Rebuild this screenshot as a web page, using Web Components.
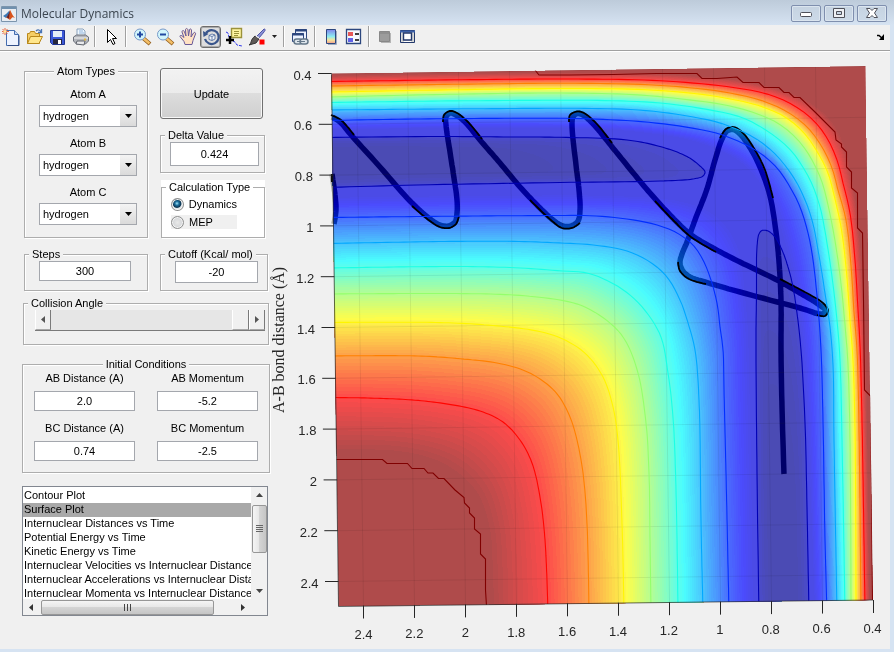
<!DOCTYPE html>
<html lang="en">
<head>
<meta charset="utf-8">
<title>Molecular Dynamics</title>
<style>
html,body{margin:0;min-height:100vh}
body{font:11px/14px "Liberation Sans",Arial,sans-serif;color:#000;background:#d6e3f2}
.row{display:grid;grid-template-columns:124px 108px;gap:12px}
.side{display:flex;flex-direction:column;padding:13px 0 0 22px;width:248px;flex:none}
.top{padding-left:2px;height:172px}
.right{display:flex;flex-direction:column}
.right push-button{margin:4px 5px 9px 0;height:51px}
.right .delta{height:45px;margin:0 3px 7px 0}
.right .calc{height:58px;margin:0 3px 0 1px}
.second{padding-left:2px;margin-top:11px;height:44px}
.angle{height:49px;margin:5px 1px 0 1px}
.initial{height:116px;margin-top:12px}
.atoms{padding-top:9px}
.pairs{display:grid;grid-template-columns:101px 101px;gap:10px 22px;padding-left:11px}
plot-list{margin:13px 2px 0 0;height:130px}
energy-surface{flex:1;min-width:0}
pick-field{margin:0 10px 9px 14px}
.plain{padding:0 5px 0 9px}
.steps{padding:0 16px 0 14px}
.cut{padding:0 9px 0 14px}
</style>
</head>
<body>
<app-window>
  <title-bar slot="title">Molecular Dynamics</title-bar>
  <tool-bar slot="tools"></tool-bar>
  <div class="side">
    <div class="row top">
      <group-panel label="Atom Types" centered>
        <div class="atoms">
        <pick-field label="Atom A"></pick-field>
        <pick-field label="Atom B"></pick-field>
        <pick-field label="Atom C"></pick-field>
        </div>
      </group-panel>
      <div class="right">
        <push-button>Update</push-button>
        <group-panel class="delta" label="Delta Value"><num-field class="plain" name="Delta Value" value="0.424" size="24"></num-field></group-panel>
        <group-panel class="calc" label="Calculation Type" light><radio-set></radio-set></group-panel>
      </div>
    </div>
    <div class="row second">
      <group-panel label="Steps"><num-field class="steps" name="Steps" value="300" size="20"></num-field></group-panel>
      <group-panel label="Cutoff (Kcal/ mol)"><num-field class="cut" name="Cutoff (Kcal/ mol)" value="-20" size="22"></num-field></group-panel>
    </div>
    <group-panel class="angle" label="Collision Angle"><angle-slider></angle-slider></group-panel>
    <group-panel class="initial" label="Initial Conditions" centered>
      <div class="pairs">
        <num-field label="AB Distance (A)" value="2.0" size="20"></num-field>
        <num-field label="AB Momentum" value="-5.2" size="20"></num-field>
        <num-field label="BC Distance (A)" value="0.74" size="20"></num-field>
        <num-field label="BC Momentum" value="-2.5" size="20"></num-field>
      </div>
    </group-panel>
    <plot-list></plot-list>
  </div>
  <energy-surface></energy-surface>
</app-window>

<script>
function define(name, html, setup) {
  customElements.define(name, class extends HTMLElement {
    constructor() {
      super();
      this.attachShadow({mode: 'open'}).innerHTML = html;
    }
    connectedCallback() {
      if (setup && !this.ready) { this.ready = true; setup(this, this.shadowRoot); }
    }
  });
}

define('app-window', `<style>
:host{display:flex;flex-direction:column;min-height:100vh}
.frame{flex:1;display:flex;flex-direction:column;background:#f0f0f0;margin:0 4px 3px 0}
.body{flex:1;display:flex;align-items:stretch}
</style><slot name="title"></slot><div class="frame"><slot name="tools"></slot><div class="body"><slot></slot></div></div>`);

define('title-bar', `<style>
:host{display:flex;align-items:center;height:25px;background:linear-gradient(#bdcbda,#d6e3f2);font:12px/16px "Open Sans","Noto Sans",sans-serif;color:#3c4650;box-sizing:border-box;padding:3px 7px 0 1px}
svg{display:block}
h1{font:inherit;margin:0 auto 0 4px}
button{width:30px;height:17px;margin:0 0 2px 3px;padding:0;border:1px solid #7f8fae;border-radius:2px;background:linear-gradient(#c6d3e1,#ccdae8);box-shadow:inset 0 0 0 1px #dbe5ef;display:grid;place-items:center}
</style>
<svg width="16" height="16" viewBox="0 0 16 16" aria-hidden="true"><path d="M.5.5h15v15H.5z" fill="#e9edf2" stroke="#7b95ad"/><path d="M1 2h14" stroke="#6f90ae" stroke-width="2"/><path d="M2 10l3-2 3-3 2 2-3 4-2 1z" fill="#3b78b5"/><path d="M5 12l3-4 1-4c1 1 2 5 5 8-2-1-3-1-4 1-1 1-2 1-3-1z" fill="#d8531c"/><path d="M6 11l2-4 1-3-1 8-1 1z" fill="#642028"/></svg>
<h1><slot></slot></h1>
<button aria-label="Minimize"><svg width="12" height="10"><rect x=".5" y="4.500" width="11" height="4" rx="1" fill="#fff" stroke="#4e5059"/></svg></button>
<button aria-label="Maximize"><svg width="12" height="10"><path fill-rule="evenodd" d="M.5.5h11v9H.5zM3.500 3.500v3h5v-3z" fill="#eef0f4" stroke="#4e5059"/></svg></button>
<button aria-label="Close"><svg width="12" height="10"><path d="M.5.5h3.500l2 2 2-2h3.500L8.500 5l3 4.500H8l-2-2-2 2H.5l3-4.500z" fill="#fff" stroke="#4e5059"/></svg></button>`);

const ICONS = {
  'New Figure': '<path d="M4.500 2.500h8l4 4v11h-12z" fill="#edf3ff" stroke="#446daf"/><path d="M12.500 2.500v4h4" fill="#c8d8f2" stroke="#446daf"/><path d="M6 17.500h11v-10" fill="none" stroke="#324e88"/><path d="M3 0v7M0 3.500h7M.5 1l5 5M5.500 1l-5 5" stroke="#e96843" stroke-width="1"/><circle cx="3" cy="3.500" r="1.500" fill="#ffe59b"/>',
  'Open File': '<path d="M2.500 15.500v-10h2l1-2h4l1 2h4v10z" fill="#f5ce65" stroke="#b8871a"/><path d="M2.500 15.500l3-7h12l-3.500 7z" fill="#ffe68b" stroke="#b8871a"/><path d="M11 3c2-2 4-1 5 1M16.500 1v3.500H13" fill="none" stroke="#4975b4" stroke-width="1.300"/>',
  'Save Figure': '<path d="M2.500 2.500h14v14h-12l-2-2z" fill="#3b58d8" stroke="#203391"/><path d="M5 3h9v6H5z" fill="#e3ecf7"/><path d="M5 11h9v5H5z" fill="#25263d"/><path d="M10 12h3v4h-3z" fill="#fff"/>',
  'Print Figure': '<path d="M6 8V1h6l2 2v6" fill="#eef7ff" stroke="#8ba3bd"/><path d="M8 3h4M8 5h5" stroke="#8fb3da"/><path d="M2.500 9l3-2h9l3 2v4l-3 3h-9l-3-3z" fill="#b4b7bd" stroke="#6c717b"/><path d="M3 10h14" stroke="#f5f5f5"/><path d="M6 13h8l-1 4-8-1z" fill="#e8e9ec" stroke="#62666e"/><path d="M13 11.500h2" stroke="#e1b73f" stroke-width="2"/>',
  'Edit Plot': '<path d="M5.500 1.500v13l3-3 2.500 5 2-1-2.500-5h4z" fill="#fff" stroke="#000"/>',
  'Zoom In': '<path d="M10 10l7 6" stroke="#915b19" stroke-width="4"/><path d="M10 10l6.500 5.500" stroke="#f3bf68" stroke-width="2.500"/><circle cx="7" cy="6.500" r="5.500" fill="#d2f5fb" stroke="#7899c9"/><path d="M4 6.500h6M7 3.500v6" stroke="#2148a1" stroke-width="2"/>',
  'Zoom Out': '<path d="M10 10l7 6" stroke="#915b19" stroke-width="4"/><path d="M10 10l6.500 5.500" stroke="#f3bf68" stroke-width="2.500"/><circle cx="7" cy="6.500" r="5.500" fill="#d2f5fb" stroke="#7899c9"/><path d="M4 6.500h6" stroke="#2148a1" stroke-width="2"/>',
  'Pan': '<path d="M6 16.500l-1-3-4-5c0-2 2-1 4 1L3 4c0-2 2-2 2.500 0L7 8 6.500 2c0-2 2-2 2.500 0L9.500 8l1-6c0-2 2.500-1 2 1L12 9l2.500-4c1-1.500 2.500 0 2 1L14 12.500l-1 4z" fill="#ffe2c3" stroke="#6a5a98"/>',
  'Rotate 3D': '<path d="M4 5a7 7 0 1 1-1 6" fill="none" stroke="#3a568c" stroke-width="2.200"/><path d="M1 3l.5 6 5-3z" fill="#3a568c"/><path d="M7 7.500l3-1.500 3 1v4l-3 1.500-3-1zM7 7.500l3 1v4M10 8.500l3-1.500" fill="#f2f6fc" stroke="#49679a" stroke-width=".8"/>',
  'Data Cursor': '<path d="M1 4l2 1 1 4 2 3 4 2 2 3 5 1" fill="none" stroke="#3038ec" stroke-dasharray="3 1"/><path d="M6.500.5h10v9h-10z" fill="#fff5a2" stroke="#9b923b" stroke-width="1.400"/><path d="M9 3.500h5M9 5.500h5M9 7.500h4" stroke="#9b923b"/><path d="M5 8v8M1 12h8" stroke="#000" stroke-width="2.500"/>',
  'Brush': '<path d="M16 1c2 0 1 2 0 3l-5 6-2-2z" fill="#8990d4" stroke="#4d54a8"/><path d="M7 8l4 3-3 4-7 2c3-2 1-5 6-9z" fill="#5d5957" stroke="#333"/><path d="M8 8l3 2" stroke="#eee" stroke-width="1.500"/><path d="M11.500 11.500h5v5h-5z" fill="#f00"/>',
  'Link Plot': '<path d="M4.500 1.500h11v10h-11z" fill="#edf3ff" stroke="#2d477e"/><path d="M4 2.500h12" stroke="#2d477e" stroke-width="2"/><path d="M1.500 5.500h11v8h-11z" fill="#edf3ff" stroke="#2d477e"/><path d="M1 6.500h12" stroke="#2d477e" stroke-width="2"/><rect x="3" y="11" width="8" height="5" rx="2.500" fill="#dce4eb" stroke="#65788a" stroke-width="1.500"/><rect x="9" y="11" width="8" height="5" rx="2.500" fill="#dce4eb" stroke="#65788a" stroke-width="1.500"/><path d="M6 13.500h8" stroke="#65788a"/>',
  'Insert Colorbar': '<defs><linearGradient id="g" x2="0" y2="1"><stop stop-color="#8183ec"/><stop offset=".5" stop-color="#8cecf1"/><stop offset=".75" stop-color="#f5e59a"/><stop offset="1" stop-color="#f09c8e"/></linearGradient></defs><path d="M4.500 1.500h9v14h-9z" fill="url(#g)" stroke="#2d477e"/><path d="M14.500 3v13.500H6" fill="none" stroke="#9fabc0"/>',
  'Insert Legend': '<path d="M1.500 1.500h14v14h-14z" fill="#f5f8fc" stroke="#2d477e" stroke-width="1.300"/><path d="M3 4h5v4H3z" fill="#e65757"/><path d="M3 10h5v4H3z" fill="#6161e7"/><path d="M10 6h4M10 12h4" stroke="#000" stroke-width="1.300"/>',
  'Hide Plot Tools': '<path d="M5 5h10v10H5z" fill="#b5b5b5"/><path d="M3.500 3.500h10v10h-10z" fill="#9c9c9c" stroke="#888"/><path d="M4 5h9" stroke="#828282"/>',
  'Show Plot Tools': '<path d="M1.500 2.500h14v12h-14z" fill="#d8d9d7" stroke="#23396c"/><path d="M1 3.500h15" stroke="#3d61a9" stroke-width="2"/><path d="M4.500 5h8v7h-8z" fill="#fff" stroke="#23396c" stroke-width="1.400"/><path d="M5 13.500h7" stroke="#fff"/>'
};
define('tool-button', `<style>
:host{display:block}
button{display:grid;place-items:center;width:21px;height:22px;padding:0;border:1px solid transparent;border-radius:3px;background:none}
:host([pressed]) button{border-color:#6c6c6c;background:#dedede;box-shadow:inset 0 0 0 1px #aaa}
svg{display:block;overflow:visible}
</style><button></button>`, (el, root) => {
  const b = root.querySelector('button'), n = el.getAttribute('name');
  b.setAttribute('aria-label', n);
  if (el.hasAttribute('pressed')) b.setAttribute('aria-pressed', 'true');
  b.innerHTML = `<svg width="18" height="18" viewBox="0 0 18 18">${ICONS[n]}</svg>`;
});
const tools = names => names.map(n => `<tool-button name="${n}"${n === 'Rotate 3D' ? ' pressed' : ''}></tool-button>`).join('');
define('tool-bar', `<style>
:host{display:flex;box-sizing:border-box;align-items:center;gap:2px;height:26px;border-bottom:1px solid #a0a0a0;box-shadow:0 1px #fff;padding-bottom:2px}
i{width:6px;height:21px;background:linear-gradient(90deg,transparent 2px,#a0a0a0 2px 3px,#fff 3px 4px,transparent 4px)}
.drop,.dock{border:0;background:none;padding:0;width:10px;height:20px;display:grid;place-items:center}
.dock{margin:0 4px 0 auto}
</style>${tools(['New Figure','Open File','Save Figure','Print Figure'])}<i></i>${tools(['Edit Plot'])}<i></i>${tools(['Zoom In','Zoom Out','Pan','Rotate 3D','Data Cursor','Brush'])}
<button class="drop" aria-label="Brush colour"><svg width="5" height="3"><path d="M0 0h5L2.500 3z" fill="#222"/></svg></button>
<i></i>${tools(['Link Plot'])}<i></i>${tools(['Insert Colorbar','Insert Legend'])}<i></i>${tools(['Hide Plot Tools','Show Plot Tools'])}
<button class="dock" aria-label="Dock"><svg width="8" height="6"><path d="M0 1.500h2l3.500 3" fill="none" stroke="#000" stroke-width="1.500"/><path d="M7 0v6H2z"/></svg></button>`);

define('group-panel', `<style>
:host{display:block}
fieldset{box-sizing:border-box;height:100%;min-width:0;margin:0;padding:0;border:1px solid #adadad;box-shadow:1px 1px #fff,inset 1px 1px #fff}
legend{padding:0 3px;margin-left:4px;background:#f0f0f0;line-height:14px;white-space:nowrap}
:host([centered]) legend{margin:0 auto}
:host([light]){background:#fff}
:host([light]) legend{background:#fff}
</style><fieldset><legend></legend><slot></slot></fieldset>`, (el, root) => {
  root.querySelector('legend').textContent = el.getAttribute('label');
});

define('pick-field', `<style>
:host{display:block}
label{display:block;text-align:center;line-height:14px;margin-bottom:4px}
.box{display:grid;grid-template-columns:1fr 16px;border:1px solid #a4a7ad;background:#fff;height:20px}
select{grid-area:1/1/2/3;appearance:none;border:0;background:none;font:inherit;color:#000;padding:0 0 0 3px;margin:0;width:100%;min-width:0}
span{grid-area:1/2;background:linear-gradient(#f4f4f4,#dadada);display:grid;place-items:center;pointer-events:none}
svg{display:block}
</style><label for="s"></label><div class="box"><span><svg width="7" height="4"><path d="M0 0h7L3.500 4z"/></svg></span><select id="s"><option>hydrogen</option></select></div>`, (el, root) => {
  root.querySelector('label').textContent = el.getAttribute('label');
});

define('num-field', `<style>
:host{display:block}
label{display:block;text-align:center;line-height:14px;margin-bottom:6px}
input{display:block;box-sizing:border-box;width:100%;border:1px solid #a4a7ad;background:#fff;text-align:center;font:inherit;color:#000;padding:0;margin:0}
</style><input id="f" type="text">`, (el, root) => {
  const f = root.querySelector('input');
  f.value = el.getAttribute('value');
  f.style.height = el.getAttribute('size') + 'px';
  const text = el.getAttribute('label');
  if (text) {
    const l = document.createElement('label');
    l.htmlFor = 'f'; l.textContent = text;
    f.before(l);
  } else f.setAttribute('aria-label', el.getAttribute('name'));
});

define('push-button', `<style>
:host{display:block}
button{width:100%;height:100%;border:1px solid #707070;border-radius:3px;background:linear-gradient(#f2f2f2,#ebebeb 50%,#dddddd 50%,#cfcfcf);box-shadow:inset 0 0 0 1px #f7f7f7;font:inherit;color:#000;padding:0}
</style><button><slot></slot></button>`);

define('radio-set', `<style>
:host{display:block;padding:3px 0 0 9px}
label{display:flex;align-items:center;gap:5px;height:14px;width:66px;margin-bottom:4px}
label+label{background:#f0f0f0}
input{appearance:none;box-sizing:border-box;width:13px;height:13px;margin:0;border:1px solid #8e8f8f;border-radius:50%;background:radial-gradient(#e9e9e9,#c6cace);box-shadow:inset 0 0 0 1px #f4f4f4}
input:checked{background:radial-gradient(circle at 45% 40%,#9fe4f8,#1c6f9d 2px,#0b3450 4px,#dfe5e9 5px)}
</style><label><input type="radio" name="t" checked>Dynamics</label><label><input type="radio" name="t">MEP</label>`);

define('angle-slider', `<style>
:host{display:flex;height:21px;margin:0 3px 0 11px;box-sizing:border-box;border-bottom:1px solid #7a7a7a;background:#e6e6e6}
button{box-sizing:border-box;width:16px;border:0;border-right:1px solid #7a7a7a;border-left:1px solid #fff;border-bottom:1px solid #a8a8a8;background:#f0f0f0;padding:0;display:grid;place-items:center}
input{flex:1;min-width:0;appearance:none;margin:0;height:20px;background:#e6e6e6}
input::-webkit-slider-thumb{appearance:none;box-sizing:border-box;width:17px;height:20px;background:#f0f0f0;border-left:1px solid #fff;border-right:1px solid #7a7a7a;border-bottom:1px solid #a8a8a8}
</style><button aria-label="Decrease"><svg width="4" height="7"><path d="M4 0v7L0 3.500z" fill="#555"/></svg></button><input type="range" aria-label="Collision Angle" min="0" max="180" value="180"><button aria-label="Increase"><svg width="4" height="7"><path d="M0 0v7l4-3.500z" fill="#555"/></svg></button>`);

define('plot-list', `<style>
:host{display:grid;box-sizing:border-box;grid-template:1fr 16px/1fr 16px;border:1px solid #828790;background:#fff}
select{border:0;outline:0;margin:0;padding:2px 0 0;overflow:hidden;scrollbar-width:none;font:inherit;color:#000;background:#fff;width:100%;height:100%;min-width:0;border-radius:0}
option{padding:0 0 0 1px;min-height:14px;line-height:14px;white-space:nowrap;color:#000}
option:checked{background:linear-gradient(#a9a9a9,#a9a9a9);color:#000}
.v,.h{display:flex;background:#f1f1f1;align-items:center}
.v{flex-direction:column}
.corner{background:#f1f1f1}
button{border:0;background:none;padding:0;display:grid;place-items:center;width:16px;height:16px}
.thumb{box-sizing:border-box;border:1px solid #979797;border-radius:2px;background:linear-gradient(90deg,#f5f5f5,#e6e6e6 50%,#d4d4d4 50%,#c5c5c5);width:15px;height:48px;margin:2px 0 auto;display:grid;place-items:center}
.h .thumb{width:173px;height:15px;margin:0 auto 0 2px;background:linear-gradient(#f5f5f5,#e6e6e6 50%,#d4d4d4 50%,#c5c5c5)}
svg{display:block}
</style><select size="8" aria-label="Plot type"><option>Contour Plot<option selected>Surface Plot<option>Internuclear Distances vs Time<option>Potential Energy vs Time<option>Kinetic Energy vs Time<option>Internuclear Velocities vs Internuclear Distance<option>Internuclear Accelerations vs Internuclear Distance<option>Internuclear Momenta vs Internuclear Distance</select>
<div class="v"><button aria-label="Scroll up"><svg width="7" height="4"><path d="M0 4h7L3.500 0z" fill="#444"/></svg></button><div class="thumb"><svg width="7" height="8"><path d="M0 .5h7M0 2.500h7M0 4.500h7M0 6.500h7" stroke="#666"/></svg></div><button aria-label="Scroll down"><svg width="7" height="4"><path d="M0 0h7L3.500 4z" fill="#444"/></svg></button></div>
<div class="h"><button aria-label="Scroll left"><svg width="4" height="7"><path d="M4 0v7L0 3.500z" fill="#333"/></svg></button><div class="thumb"><svg width="8" height="7"><path d="M.5 0v7M3.500 0v7M6.500 0v7" stroke="#444"/></svg></div><button aria-label="Scroll right"><svg width="4" height="7"><path d="M0 0v7l4-3.500z" fill="#333"/></svg></button></div><div class="corner"></div>`);

/* Equipotential curves of the H3 surface: level, outer wall, inner wall. */
const LEVELS = [
 [.985,[330,75,440,73,560,72,650,73,700,76,740,80,780,89,805,99,828,116,843,140,852,175,858,215,862,260,865,320,868,450,870,612],
       [330,454,400,456,440,468,472,495,485,530,488,570,489,612]],
 [.87,[330,81.500,440,80,560,79,643,80,693,83,730,87,767,94,793,105,813,120,827,138,837,160,843,183,850,213,855,260,858,310,860,345,862,420,865,612],
       [330,397.500,367,398,413,400,447,404,480,411,503,422,520,440,532,463,540,497,545,540,548,612]],
 [.75,[330,86,440,84.500,560,83.300,643,84.500,693,88,730,93,763,101,789,113,808,128,822,147,832,168,838,190,846,220,851,265,854,312,857,350,859,430,861,612],
       [330,356,420,356,463,359,497,363,523,370,543,381,558,395,570,417,577,440,583,473,587,523,589,612]],
 [.635,[330,92,440,90,560,88.500,640,89.500,690,93,725,98,760,106,785,117,804,133,818,153,828,173,834,195,841,227,846,267,850,320,853,360,855,430,856,612],
       [330,322.500,437,322.500,487,325,537,331,563,339,586,354,603,377,613,407,618,440,622,523,624,612]],
 [.52,[330,97,440,94.500,560,93,640,95,690,100,725,105,755,113,779,124,798,140,812,160,822,182,828,205,834,235,840,275,845,325,848,365,850,440,851,612],
       [330,294,490,294,537,297,570,302,587,308,610,323,625,340,638,373,646,423,649,473,650,540,651,612]],
 [.4,[330,102.500,440,101,560,100.300,603,100.500,660,103,710,110,743,118,773,135,793,153,810,180,820,207,827,243,832,277,837,320,840,360,842,440,845,612],
       [330,268,463,266.500,520,268,562,271,587,273,610,282,630,295,647,313,661,337,668,373,673,417,676,490,678,612]],
 [.29,[330,110,440,109,560,108.300,593,108.500,627,109.300,660,112,693,117,720,123,753,137,773,152,790,172,802,193,812,220,818,250,825,293,830,327,833,365,834,440,837,612],
       [330,243.500,443,241.500,520,241.500,560,243,593,245,627,251,650,262,667,277,680,300,688,323,695,350,699,400,701,523,703,612]],
 [.17,[330,120.500,417,119,560,118.300,593,119,633,121,667,124.300,693,128.300,717,133.300,740,142,760,153,777,168,790,187,800,207,808,233,813,260,818,307,821,350,823,420,825,540,827,612],
       [330,217.500,420,216.500,560,215.500,590,215.700,627,219,657,225,677,233,693,245,703,260,710,277,717,303,720,327,723,350,724,390,726,473,729,612]],
 [.085,[330,130,560,129,640,133,700,144,742,165,768,200,785,250,797,310,805,400,814,612],
       [330,196,500,194,600,194,680,199,715,212,738,240,748,300,752,400,755,612]]
];
const LOBES = [
 [[326,137.500,440,136.500,510,137,560,137.300,627,140,660,146.500,687,156.500,700,166,705,172,703,176,693,179,660,181,560,182.500,417,185,326,187.500],[326,161]],
 [[759,615,757,473,756,340,756.500,293,757,247,759,234,762,230.500,768,231,775,237,782,250,788,267,793,287,797,313,801,350,805,423,807,507,809,615],[783,615]]
];
const RED_EDGES = [
 [535,70,539,75,570,75,613,74.500,657,73.500,697,73.500,702,78.500,717,78.500,737,77,743,82.500,759,82.500,764,87.500,779,87.500,784,92.500,789,92.500,794,97.500,800,97.500,815,112,835,132,836,140,841.500,144,841.500,147,846.500,152,846.500,167,851.500,172,851.500,188,857.500,193,857.500,228,862.500,233,863.500,300,864.500,390,870.500,396,871.500,480,872.500,600],
 [336,459.500,382.500,459.500,387,463.500,407.500,463.500,412,468.500,424,468.500,428,473,433,473,438.500,478.500,444,478.500,455,490,464,497.500,464.500,503,469.500,508,469.500,513,474.500,518,474.500,529,480.500,534,480.500,554,485.500,559,485.500,590,486.500,606]
];
const PATH = [332,117,340,122,352,136,380,167,410,201,430,219,440,225,448,226,455,222,457,213,457,200,454,178,450,152,446,125,446,117,450,113,456,115,465,122,480,140,500,163,520,187,540,208,553,220,563,226,571,226,578,221,580,210,579,190,576,165,572,125,573,117,577,113.500,583,115,595,126,609,143,630,169,650,193,672,217,690,234,713,248,740,262,775,279,800,293,818,304,826,311,822,314,800,308,740,292,705,282,690,277,683,271,680,263,682,254,687,242,695,220,707,189,715,160,722,139,727,131,733,129.500,740,134,752,151,762,172,770,196,776,232,779,262,781,300,781,350,782,407,784,474];
const STUB = [332,174,335,195,336,210,334,224];
const RIMS = [
 [331,115,341,120,354,135],[443,122,444,115,450,111,457,113,468,122,482,139],[412,206,430,221,440,227,449,228,456,224,459,216],
 [569,122,570,115,577,111.500,584,113,597,124,612,143],[530,200,552,221,562,228,572,228,580,223],
 [720,138,726,129,733,127,742,132,755,150,765,170,773,198],[655,201,673,220,691,237,716,252],
 [678,262,680,271,689,279,706,284],[780,279,803,291,824,304,828,311,825,316,817,315]
];
const pairs = a => { const r = []; for (let i = 0; i < a.length; i += 2) r.push([a[i], a[i + 1]]); return r; };
function spline(flat) {
  const p = pairs(flat), out = [];
  for (let i = 0; i < p.length - 1; i++) {
    const a = p[i - 1] || p[i], b = p[i], c = p[i + 1], d = p[i + 2] || c;
    const ab = Math.sqrt(Math.hypot(b[0]-a[0], b[1]-a[1])) || 1, bc = Math.sqrt(Math.hypot(c[0]-b[0], c[1]-b[1])) || 1, cd = Math.sqrt(Math.hypot(d[0]-c[0], d[1]-c[1])) || 1;
    const m = [0, 1].map(k => [
      bc * ((b[k]-a[k])/ab - (c[k]-a[k])/(ab+bc) + (c[k]-b[k])/bc),
      bc * ((c[k]-b[k])/bc - (d[k]-b[k])/(bc+cd) + (d[k]-c[k])/cd)]);
    for (let s = 0; s < 10; s++) {
      const t = s / 10, t2 = t*t, t3 = t2*t;
      out.push([0, 1].map(k => (2*t3-3*t2+1)*b[k] + (t3-2*t2+t)*m[k][0] + (3*t2-2*t3)*c[k] + (t3-t2)*m[k][1]));
    }
  }
  out.push(p[p.length - 1]);
  return out;
}
function resample(pts, n) {
  const len = [0];
  for (let i = 1; i < pts.length; i++) len.push(len[i-1] + Math.hypot(pts[i][0]-pts[i-1][0], pts[i][1]-pts[i-1][1]));
  const out = []; let j = 1;
  for (let i = 0; i <= n; i++) {
    const L = len[len.length-1] * i / n;
    while (j < pts.length - 1 && len[j] < L) j++;
    const f = (L - len[j-1]) / (len[j] - len[j-1]);
    out.push([pts[j-1][0] + (pts[j][0]-pts[j-1][0])*f, pts[j-1][1] + (pts[j][1]-pts[j-1][1])*f]);
  }
  return out;
}
const toPath = pts => 'M' + pts.map(q => q[0].toFixed(1) + ' ' + q[1].toFixed(1)).join('L');
const blend = (a, b, f) => a.map((q, i) => [q[0] + (b[i][0]-q[0])*f, q[1] + (b[i][1]-q[1])*f]);
const channel = (t, c) => Math.max(0, Math.min(1, 1.5 - Math.abs(4*t - c)));
const jet = t => `rgb(${[3,2,1].map(c => Math.round(255*channel(t, c)))})`;
const soft = t => `rgb(${[3,2,1].map(c => Math.round(75 + 178*channel(t, c)))})`;

define('energy-surface', `<style>
:host{display:block}
svg{display:block;width:100%;height:auto;font:13px "Liberation Sans",Arial,sans-serif;fill:#262626}
</style><svg viewBox="270 51 620 598" role="img" aria-label="Potential energy surface with trajectory"></svg>`, (el, root) => {
  const quad = 'M331.500 73.500L865.500 66L873 600L338.500 606.500Z';
  const c = LEVELS.map(([t, o, i]) => [t, resample(spline(o), 120), resample(spline(i), 120)]);
  let fills = `<path d="${quad}" fill="${soft(.985)}"/>`, lines = '', axes = '', grid = '';
  for (let k = 0; k < c.length - 1; k++) for (let s = 0; s < 12; s++) {
    const f = s / 12, t = c[k][0] + (c[k+1][0] - c[k][0]) * f;
    fills += `<path d="${toPath(blend(c[k][1], c[k+1][1], f).concat(blend(c[k][2], c[k+1][2], f).reverse()))}Z" fill="${soft(t)}"/>`;
  }
  c.slice(1, -1).forEach(([t, o, i]) => { lines += `<path d="${toPath(o)}" stroke="${jet(t)}"/><path d="${toPath(i)}" stroke="${jet(t)}"/>`; });
  LOBES.forEach(([flat, [cx, cy]]) => {
    const p = spline(flat);
    [[1,.058],[.93,.048],[.84,.038],[.74,.03],[.6,.022]].forEach(([z, t]) => { fills += `<path d="${toPath(p.map(q => [cx + (q[0]-cx)*z, cy + (q[1]-cy)*z]))}Z" fill="${soft(t)}"/>`; });
    lines += `<path d="${toPath(p)}" stroke="#0000b4"/>`;
  });
  RED_EDGES.forEach(r => { lines += `<path d="${toPath(pairs(r))}" stroke="#800000"/>`; });
  const names = ['2.4','2.2','2','1.8','1.6','1.4','1.2','1','0.8','0.6','0.4'];
  names.forEach((n, i) => {
    const f = i / 10, x = 363.500 + 51*i, y = 605.500 - .55*i;
    axes += `<path d="M${x} ${y}v13"/><text x="${x - f}" y="${(638.500 - .6*i).toFixed(1)}" text-anchor="middle">${n}</text>`;
    grid += `<path d="M${x} ${y}L${x - 7} ${73 - 7*f}"/>`;
    const ly = 581.500 - 50.800*i, lx = 338.500 - 7*f;
    axes += `<path d="M${lx} ${ly}h-13.500"/><text x="${lx - 20}" y="${ly + 6}" text-anchor="end">${n}</text>`;
    grid += `<path d="M${lx} ${ly}L${lx + 534} ${ly - 7}"/>`;
  });
  axes = axes.replace(/<path/g, '<path stroke="#262626" fill="none"');
  root.querySelector('svg').innerHTML = `<defs><clipPath id="q"><path d="${quad}"/></clipPath></defs>
  <g clip-path="url(#q)"><g shape-rendering="crispEdges">${fills}</g><g stroke="#000" stroke-opacity=".07" fill="none">${grid}</g></g>
  <g fill="none" stroke="#4b4b4b" stroke-width="5.500" style="mix-blend-mode:difference"><path d="${toPath(spline(PATH))}"/><path d="${toPath(spline(STUB))}"/></g>
  <g fill="none" stroke="#000" stroke-width="1.800">${RIMS.map(r => `<path d="${toPath(spline(r))}"/>`).join('')}<path d="M332 174v8"/></g>
  <g clip-path="url(#q)" fill="none" stroke-width="1.100">${lines}</g>
  <path d="M331.500 73.500L338.500 606.500L873 600" fill="none" stroke="#262626" stroke-opacity=".7"/>${axes}
  <text transform="translate(284 413) rotate(-90)" font-family="'Liberation Serif',serif" font-size="16">A-B bond distance (Å)</text>`;
});
</script>
</body>
</html>
